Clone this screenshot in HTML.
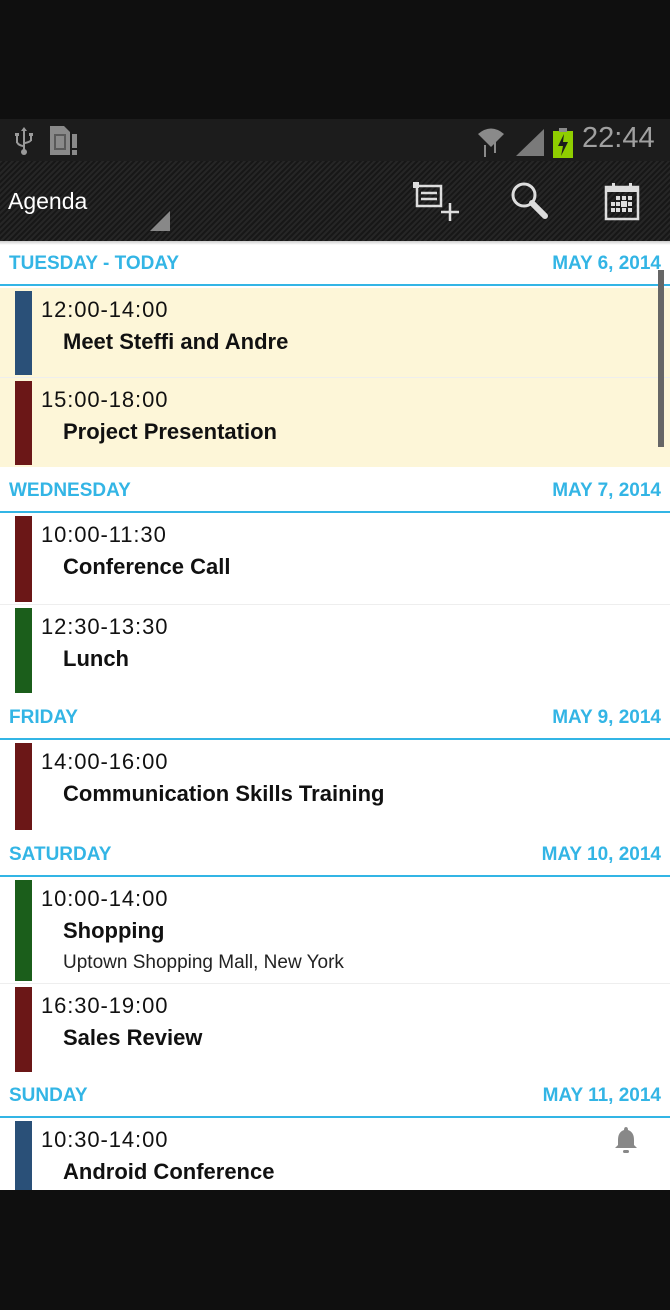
<!DOCTYPE html>
<html><head><meta charset="utf-8"><style>
*{margin:0;padding:0;box-sizing:border-box}
body{width:670px;height:1310px;background:#0f0f0f;position:relative;overflow:hidden;font-family:"Liberation Sans",sans-serif}
.a{position:absolute}
.status{top:119px;left:0;width:670px;height:42px;background:#1c1c1c}
.bar{top:161px;left:0;width:670px;height:80px;background:repeating-linear-gradient(135deg,#262626 0 2px,#171717 2px 4px)}
.content{top:241px;left:0;width:670px;height:949px;background:#fff;overflow:hidden}
.hd{position:absolute;left:0;width:670px;height:45px;border-bottom:2px solid #33b5e5;color:#33b5e5;font-weight:bold;font-size:19px}
.hd span{position:absolute;top:12px}
.hd .l{left:9px}.hd .r{right:9px}
.ev{position:absolute;left:0;width:670px;border-bottom:1px solid #eee}
.ev .c{position:absolute;left:15px;top:3px;width:17px;bottom:2px}
.ev .t{position:absolute;left:41px;top:9px;font-size:22px;color:#111;letter-spacing:.9px}
.ev .n{position:absolute;left:63px;top:41px;font-size:22px;font-weight:bold;color:#111}
.ev .s{position:absolute;left:63px;top:75px;font-size:19px;color:#222}
.y{background:#fdf6d8}
</style></head><body>
<div class="a status">
 <svg class="a" style="left:12px;top:8px" width="24" height="28" viewBox="0 0 24 28" fill="#9a9a9a"><rect x="11" y="2" width="2" height="24"/><path d="M9 4 L12 0 L15 4Z"/><circle cx="12" cy="25" r="3"/><rect x="4" y="8" width="2" height="8"/><rect x="18" y="8" width="2" height="6"/><path d="M4 15 Q5 19 11 20 L11 18 Q7 17 6 15Z"/><path d="M20 13 Q19 16 13 17 L13 15 Q17 14 18 13Z"/><rect x="3" y="6" width="4" height="3"/><rect x="17" y="6" width="4" height="3"/></svg>
 <svg class="a" style="left:50px;top:7px" width="30" height="30" viewBox="0 0 30 30"><path d="M0 0 H14 L20 6 V29 H0Z" fill="#8a8a8a"/><rect x="4" y="8" width="12" height="16" fill="#5a5a5a"/><rect x="6" y="10" width="8" height="12" fill="#8a8a8a"/><rect x="22" y="8" width="5" height="14" fill="#8a8a8a"/><rect x="22" y="24" width="5" height="5" fill="#8a8a8a"/></svg>
 <svg class="a" style="left:476px;top:6px" width="30" height="32" viewBox="0 0 30 32" fill="#8a8a8a"><path d="M2 9 Q15 -2 28 9 L15 22Z"/><rect x="8" y="20" width="2" height="12"/><rect x="18" y="16" width="2" height="12"/></svg>
 <svg class="a" style="left:516px;top:10px" width="30" height="28" viewBox="0 0 30 28" fill="#7a7a7a"><path d="M0 27 L28 0 V27Z"/></svg>
 <div class="a" style="left:553px;top:12px;width:20px;height:27px;background:#8fce00"></div>
 <div class="a" style="left:559px;top:9px;width:8px;height:4px;background:#8a8a8a"></div>
 <svg class="a" style="left:556px;top:15px" width="14" height="22" viewBox="0 0 14 22" fill="#1c1c1c"><path d="M8 0 L2 12 H7 L5 22 L12 8 H7Z"/></svg>
 <div class="a" style="left:582px;top:3px;font-size:29px;color:#a0a0a0">22:44</div>
</div>
<div class="a bar">
 <div class="a" style="left:8px;top:27px;font-size:23px;color:#fff">Agenda</div>
 <svg class="a" style="left:150px;top:50px" width="20" height="20"><path d="M0 20 L20 0 V20Z" fill="#888"/></svg>
 <svg class="a" style="left:412px;top:20px" width="48" height="42" viewBox="0 0 48 42" fill="none" stroke="#ddd" stroke-width="2.5"><rect x="5" y="5" width="24" height="20"/><path d="M9 12 H25 M9 18 H25"/><rect x="1" y="1" width="6" height="6" fill="#ddd" stroke="none"/><path d="M38 22 V40 M29 31 H47"/></svg>
 <svg class="a" style="left:508px;top:18px" width="42" height="42" viewBox="0 0 42 42" fill="none" stroke="#ddd"><circle cx="16" cy="16" r="11" stroke-width="3"/><path d="M24 24 L37 37" stroke-width="6" stroke-linecap="round"/></svg>
 <svg class="a" style="left:602px;top:20px" width="40" height="40" viewBox="0 0 40 40"><rect x="4" y="6" width="32" height="32" fill="none" stroke="#ddd" stroke-width="2.5"/><rect x="4" y="6" width="32" height="5" fill="#ddd"/><rect x="10" y="2" width="3" height="7" fill="#ddd"/><rect x="27" y="2" width="3" height="7" fill="#ddd"/><g fill="#ddd"><rect x="14" y="15" width="4" height="4"/><rect x="20" y="15" width="4" height="4"/><rect x="26" y="15" width="4" height="4"/><rect x="9" y="21" width="4" height="4"/><rect x="14" y="21" width="4" height="4"/><rect x="19" y="20" width="6" height="6"/><rect x="26" y="21" width="4" height="4"/><rect x="9" y="27" width="4" height="4"/><rect x="14" y="27" width="4" height="4"/><rect x="20" y="27" width="4" height="4"/><rect x="26" y="27" width="4" height="4"/></g></svg>
</div>
<div class="a content">
 <div class="a" style="left:0;top:0;width:670px;height:4px;background:linear-gradient(#ccc,#fff)"></div>
 <div class="hd" style="top:0"><span class="l">TUESDAY - TODAY</span><span class="r">MAY 6, 2014</span></div>
 <div class="ev y" style="top:47px;height:90px"><div class="c" style="background:#2a5078"></div><div class="t">12:00-14:00</div><div class="n">Meet Steffi and Andre</div></div>
 <div class="ev y" style="top:137px;height:89px;border:none"><div class="c" style="background:#6b1717"></div><div class="t">15:00-18:00</div><div class="n">Project Presentation</div></div>
 <div class="hd" style="top:227px"><span class="l">WEDNESDAY</span><span class="r">MAY 7, 2014</span></div>
 <div class="ev" style="top:272px;height:92px"><div class="c" style="background:#6b1717"></div><div class="t">10:00-11:30</div><div class="n">Conference Call</div></div>
 <div class="ev" style="top:364px;height:90px;border:none"><div class="c" style="background:#1b5e1b"></div><div class="t">12:30-13:30</div><div class="n">Lunch</div></div>
 <div class="hd" style="top:454px"><span class="l">FRIDAY</span><span class="r">MAY 9, 2014</span></div>
 <div class="ev" style="top:499px;height:92px;border:none"><div class="c" style="background:#6b1717"></div><div class="t">14:00-16:00</div><div class="n">Communication Skills Training</div></div>
 <div class="hd" style="top:591px"><span class="l">SATURDAY</span><span class="r">MAY 10, 2014</span></div>
 <div class="ev" style="top:636px;height:107px"><div class="c" style="background:#1b5e1b"></div><div class="t">10:00-14:00</div><div class="n">Shopping</div><div class="s">Uptown Shopping Mall, New York</div></div>
 <div class="ev" style="top:743px;height:90px;border:none"><div class="c" style="background:#6b1717"></div><div class="t">16:30-19:00</div><div class="n">Sales Review</div></div>
 <div class="hd" style="top:832px"><span class="l">SUNDAY</span><span class="r">MAY 11, 2014</span></div>
 <div class="ev" style="top:877px;height:90px;border:none"><div class="c" style="background:#2a5078;bottom:-10px"></div><div class="t">10:30-14:00</div><div class="n">Android Conference</div>
  <svg class="a" style="left:614px;top:8px" width="24" height="28" viewBox="0 0 24 28" fill="#888"><path d="M12 1 Q14 1 14 4 Q20 6 20 14 V19 L23 22 H1 L4 19 V14 Q4 6 10 4 Q10 1 12 1Z"/><rect x="9" y="24" width="6" height="3" rx="1.5"/></svg></div>
 <div class="a" style="left:658px;top:29px;width:6px;height:177px;background:#666"></div>
</div>
</body></html>
